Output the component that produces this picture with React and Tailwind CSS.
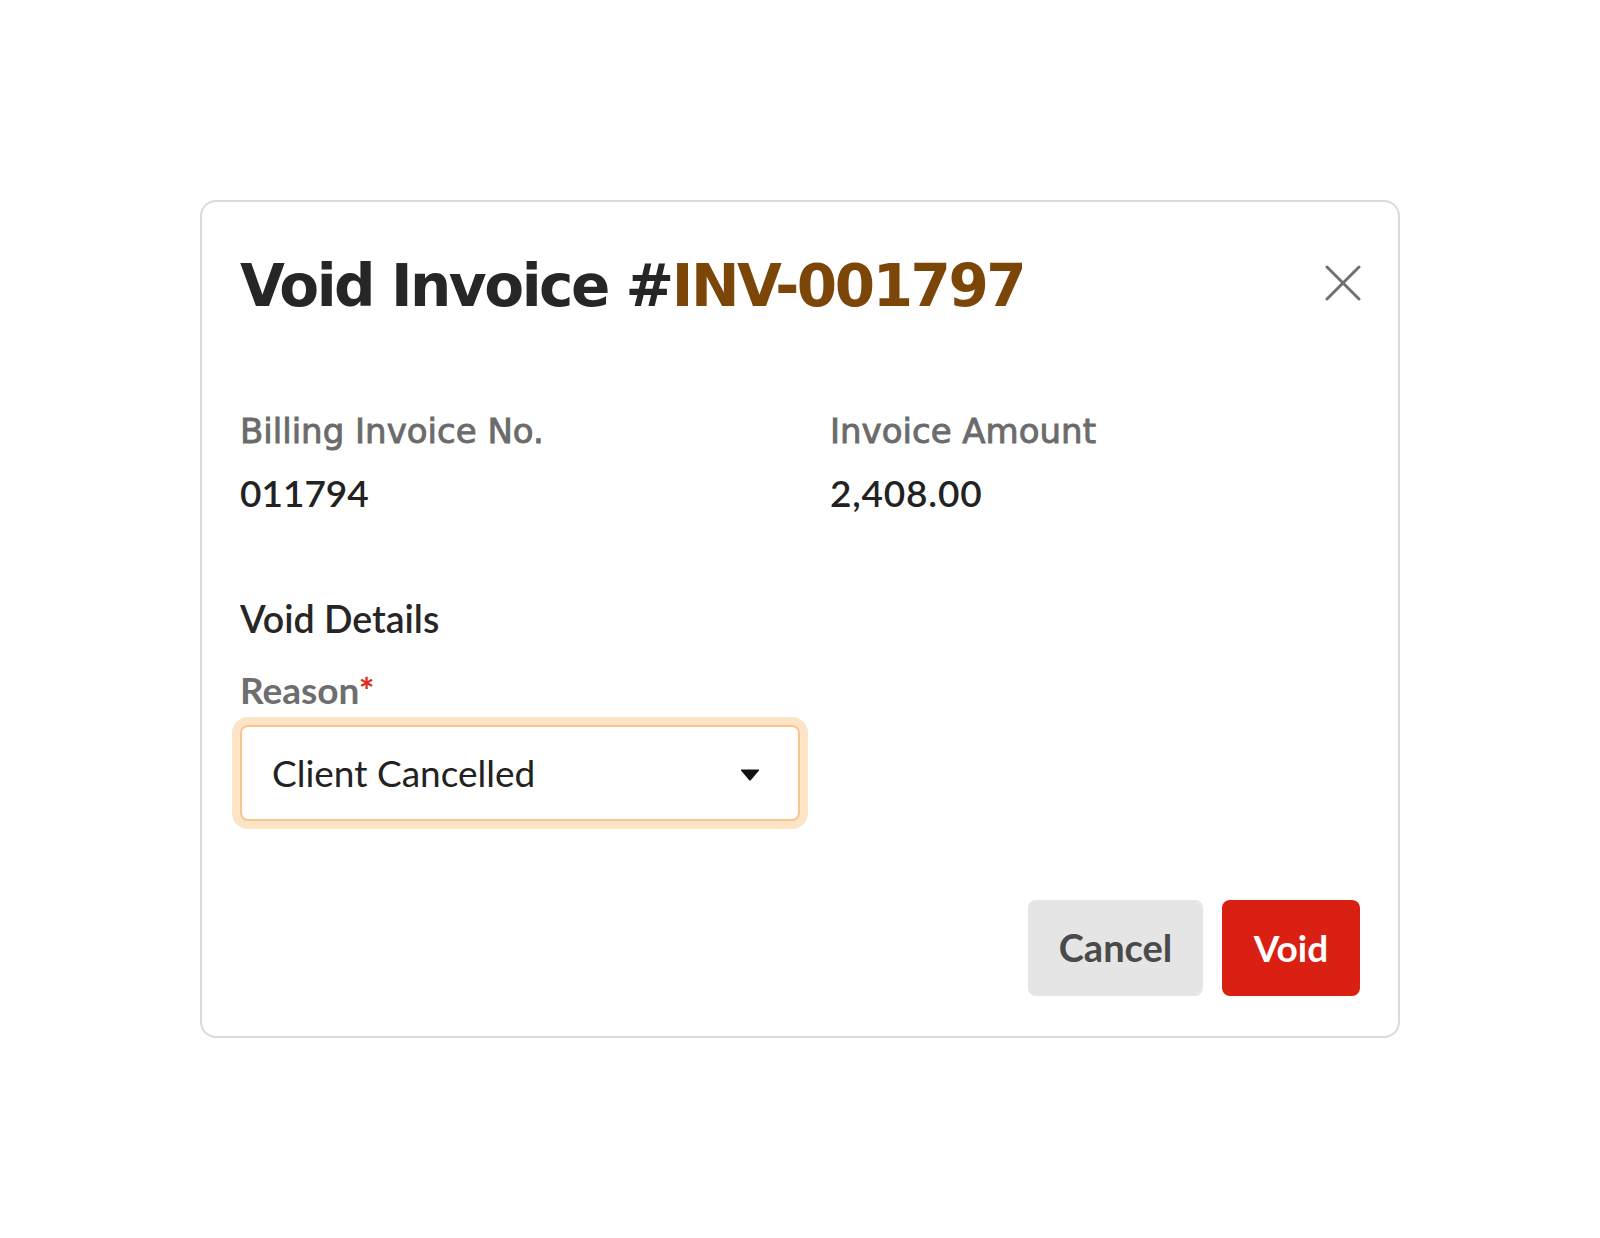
export default function App() {
  return (
    <div className="flex min-h-screen items-center justify-center bg-white font-['Lato',sans-serif]">
      <div className="w-[1200px] rounded-[16px] border-2 border-[#dadada] bg-white px-[38px] pb-[40px] pt-[38px]">
        <div className="mt-[17px] flex items-center justify-between">
          <h1 className="font-['DejaVu_Sans',sans-serif] text-[58px] font-bold leading-none tracking-[-2.45px] text-[#262626]">
            Void Invoice #<span className="text-[#7b4608]">INV-001797</span>
          </h1>
          <button className="mr-[-1px] mt-[-6px] flex h-[36px] w-[36px] items-center justify-center">
            <svg width="36" height="36" viewBox="0 0 36 36" fill="none" stroke="#707070" strokeWidth="3" strokeLinecap="round">
              <line x1="2" y1="2" x2="34" y2="34" />
              <line x1="34" y1="2" x2="2" y2="34" />
            </svg>
          </button>
        </div>

        <div className="mt-[99px] flex">
          <div className="w-[590px]">
            <div className="font-['DejaVu_Sans',sans-serif] text-[34px] leading-none text-[#6b6b6b] [-webkit-text-stroke:0.9px_#6b6b6b]">
              Billing Invoice No.
            </div>
            <div className="mt-[26px] text-[37px] font-semibold leading-none text-[#222222]">011794</div>
          </div>
          <div>
            <div className="font-['DejaVu_Sans',sans-serif] text-[34px] leading-none text-[#6b6b6b] [-webkit-text-stroke:0.9px_#6b6b6b]">
              Invoice Amount
            </div>
            <div className="mt-[26px] text-[37px] font-semibold leading-none tracking-[0.8px] text-[#222222]">2,408.00</div>
          </div>
        </div>

        <div className="mt-[89px] text-[37.5px] font-semibold leading-none text-[#262626]">Void Details</div>
        <div className="mt-[33px] text-[37px] font-bold leading-none text-[#6e6e6e]">
          Reason<span className="text-[#d92d20]">*</span>
        </div>

        <div className="mt-[17px] flex h-[96px] w-[560px] items-center justify-between rounded-[8px] border-2 border-[#f8c68c] bg-white pl-[30px] pr-[38px] shadow-[0_0_0_8px_#fde4c6]">
          <span className="text-[37px] leading-none text-[#222222]">Client Cancelled</span>
          <svg width="20" height="12" viewBox="0 0 20 12" className="mt-[4px]">
            <path d="M1 1.5 Q0.5 0.5 2 0.5 L18 0.5 Q19.5 0.5 19 1.5 L11 11 Q10 12 9 11 Z" fill="#111111" />
          </svg>
        </div>

        <div className="mt-[79px] flex justify-end gap-[19px]">
          <button className="flex h-[96px] w-[175px] items-center justify-center rounded-[8px] bg-[#e5e5e5] text-[38px] font-bold text-[#4a4a4a]">
            Cancel
          </button>
          <button className="flex h-[96px] w-[138px] items-center justify-center rounded-[8px] bg-[#d92012] text-[37px] font-bold text-white">
            Void
          </button>
        </div>
      </div>
    </div>
  );
}
